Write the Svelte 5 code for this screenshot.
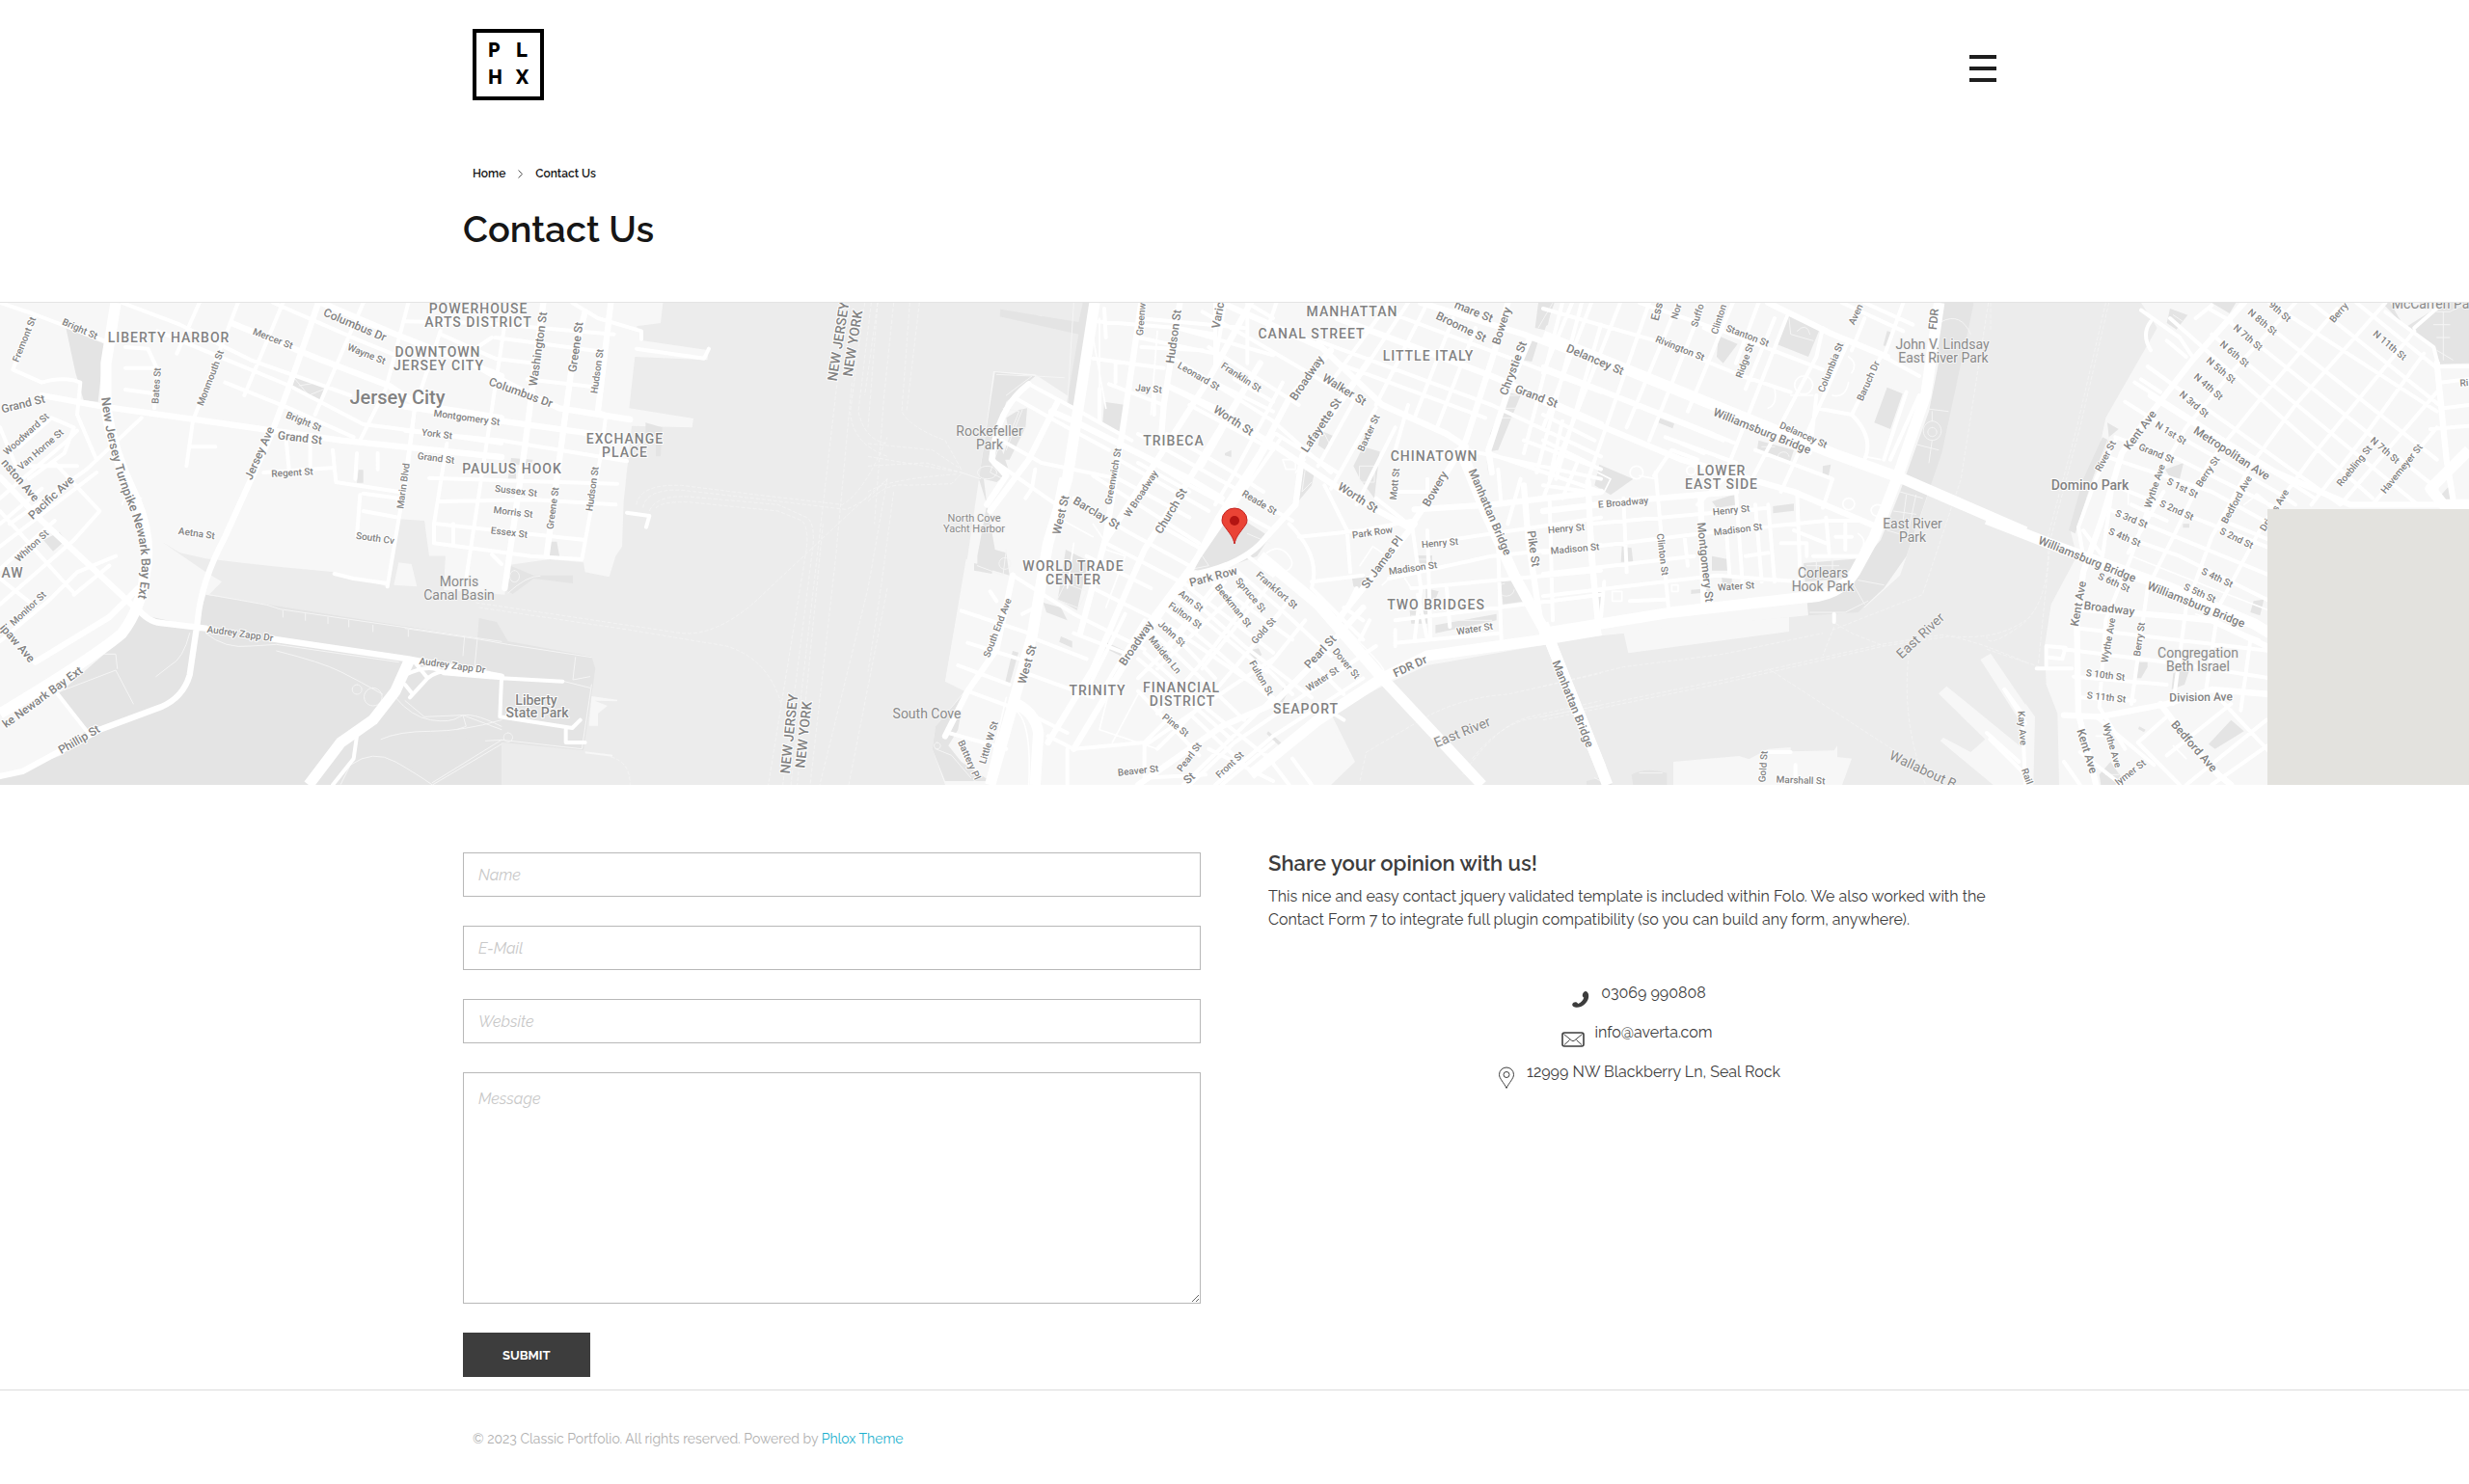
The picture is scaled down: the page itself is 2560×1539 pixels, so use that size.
<script lang="ts">
	type Kind = 'street' | 'avenue' | 'district' | 'place' | 'park' | 'small' | 'city';
	type Label = [text: string, x: number, y: number, angle: number, kind: Kind];

	interface Tile {
		x: number;
		water: string;
		land?: string;
		parks: string;
		paths?: string;
		ferries?: string;
		highways: string;
		avenues: string;
		streets: string;
		lanes?: string;
		labels: Label[];
	}

	// Every tile is drawn at three units to the pixel.
	const tiles: Tile[] = [
		{
			x: 0,
			water:
				'M505 757L560 790 640 808 850 832 1040 850 1205 895 1240 685 1320 690 1330 800 1385 800 1380 905 1560 940V1170L880 980 650 920 690 880 640 850Z',
			land: 'M1240 820L1280 825 1297 895 1225 890Z',
			parks:
				'M640 920L830 950 1560 1066V1512H0V1490L190 1420 270 1340 180 1230 330 1100 430 980 610 1020Z M910 235L1010 275 1000 315 905 280Z M205 90L325 140 305 320 260 315 235 230Z M1115 532h15v40h-20z M135 750l50-25 20 25-40 35z',
			paths:
				'M650 920L830 952 870 965 1560 1066 M880 970v20 M950 980v20 M1020 990v20 M1085 1000v20 M1160 1015v20 M1270 1030v20 M640 1040Q700 1090 780 1080L860 1075 1240 1130 M860 1095Q1000 1130 1060 1160T1190 1230 M1230 1240Q1280 1300 1340 1310T1430 1300T1560 1330 M1185 1370Q1240 1345 1340 1345T1560 1310 M1060 1510L1090 1450Q1160 1400 1230 1440T1345 1512L1560 1385 M190 1220L360 1155 415 1260 M320 1105H360L365 1150 M590 1040Q570 1120 530 1140L485 1175 M1110 1200a15 15 0 1 0 1 0z M1160 1210a28 28 0 1 0 1 0z M910 240L960 300 1010 280 M930 270L990 260',
			highways:
				'M360 12L330 200V340Q350 480 420 620 475 750 450 860 440 960 380 1040 300 1110 0 1290 M1275 1120L1230 1220 1160 1310 1060 1380 960 1512',
			avenues:
				'M990 12Q910 250 840 430L700 740Q625 880 615 1000L590 1170Q570 1240 500 1270L310 1340 70 1470 0 1485 M130 300L320 335 640 380 1060 440 1560 492 M430 970L130 690 0 555 M425 960Q460 1005 500 1008L640 1025 M850 1058L1270 1120 1560 1175 M110 1130L340 990 430 900 M720 75L1000 190 1210 270 1300 330 1560 370 M1000 12L1230 110 1560 240',
			streets:
				'M0 12L100 45 350 140 M380 12L560 80 780 190 1090 300 M850 12L1120 130 1330 215 M490 100L900 270 1130 390 1300 412 1560 450 M700 260L900 340 1100 430 M740 12L600 380 580 520 M620 12L550 170 M880 12L760 300 M1130 12L980 360 M1270 12L1200 280 1120 440 M390 150L460 155 490 220 480 340 M390 215H490 M390 282L480 295 M0 620L210 440 240 410 M0 770L300 540 M0 840L170 690 M0 950L230 750 310 660 170 510 M0 1065L150 940 240 850 360 800 M230 920L340 830 M0 660L230 915 M0 870L100 950 M0 700L130 590 M40 220L110 50 M40 220L130 260Q200 240 250 260L240 360 300 500 M590 460H670 M890 440L900 540 M965 440V530 M1035 470L1045 570 1240 600 M820 540L1040 525 M1110 480L1105 560 M1175 480V530 M1120 610L1110 740 M1130 605L1240 620 M1130 660L1240 680 M1290 340L1270 510 1205 895 M1040 855L1100 870 1205 885 M180 1230L270 1345 M440 370L270 530 30 700 M1110 1360L1100 1430 1035 1512 M60 460L160 370 230 400 200 480 90 560 M0 400L50 520H240 M1290 1130L1330 1180 1275 1240 M1330 1180Q1370 1150 1420 1160L1560 1175',
			lanes:
				'M380 640Q390 600 440 620',
			labels: [
				['LIBERTY HARBOR', 524, 121, 0, 'district'],
				['Fremont St', 76, 125, -68, 'street'],
				['Bright St', 250, 92, 24, 'street'],
				['Bates St', 485, 270, -86, 'street'],
				['Monmouth St', 655, 247, -69, 'street'],
				['Mercer St', 850, 123, 21, 'street'],
				['Columbus Dr', 1105, 80, 23, 'avenue'],
				['Wayne St', 1140, 170, 22, 'street'],
				['DOWNTOWN', 1362, 166, 0, 'district'],
				['JERSEY CITY', 1366, 208, 0, 'district'],
				['Jersey City', 1237, 305, 0, 'city'],
				['Grand St', 72, 328, -14, 'avenue'],
				['Woodward St', 80, 420, -42, 'street'],
				['Van Horne St', 125, 468, -41, 'street'],
				['nston Ave', 62, 565, 50, 'avenue'],
				['Pacific Ave', 160, 618, -43, 'avenue'],
				['Whiton St', 100, 768, -43, 'street'],
				['AW', 40, 852, 0, 'district'],
				['Monitor St', 86, 963, -43, 'street'],
				['ipaw Ave', 54, 1070, 49, 'avenue'],
				['ke Newark Bay Ext', 133, 1238, -36, 'avenue'],
				['Phillip St', 246, 1372, -30, 'avenue'],
				['Jersey Ave', 806, 480, -66, 'avenue'],
				['Bright St', 944, 380, 22, 'street'],
				['Grand St', 934, 433, 7, 'avenue'],
				['Regent St', 910, 540, -3, 'street'],
				['Aetna St', 612, 730, 8, 'street'],
				['Marin Blvd', 1254, 582, -82, 'street'],
				['South Cv', 1166, 745, 8, 'street'],
				['York St', 1360, 421, 7, 'street'],
				['Grand St', 1357, 494, 7, 'street'],
				['Montgomery St', 1453, 369, 8, 'street'],
				['Morris', 1429, 880, 0, 'place'],
				['Canal Basin', 1427, 922, 0, 'place'],
				['Audrey Zapp Dr', 748, 1042, 8, 'street'],
				['Audrey Zapp Dr', 1406, 1140, 8, 'street']
			]
		},
		{
			x: 1260,
			water:
				'M802 12L795 75 720 85 740 130 945 160 940 190 715 180 697 340 897 372 893 400 705 395 680 630 675 770 655 800 635 865 560 850 555 820 450 810 320 828 310 920 120 905 125 800 75 800 60 690H0V1512H1500V12Z',
			parks:
				'M0 1018L225 1055 230 993 285 1005 320 1065 580 1112 592 1150 555 1405 250 1375 100 1355 0 1358Z M0 1440L75 1512H0Z M315 825L400 860 522 860V885L400 870 335 918 310 905Z M330 495L398 500 390 520 345 515V560H320Z M450 755h22l10 55h-35z M748 385L800 400 795 490H780V440L748 415Z',
			paths:
				'M0 1025L225 1058 320 1075 580 1115 M225 1055L215 1160 M185 1050L180 1110 M530 1115L522 1185 575 1175 M575 1210L495 1190 M580 1200L550 1400 300 1372 250 1375 M300 1372L85 1505 M0 1250L60 1300 180 1295 300 1340 M180 1295L190 1330 160 1340 M320 1350a14 14 0 1 0 1 0z M340 845a15 18 0 1 0 1 0z M320 915Q380 860 420 862',
			land:
				'M580 1236L660 1247V1252L590 1250 630 1266 600 1290V1328H572ZM560 1408L645 1418V1424L560 1414Z',
			ferries:
				'M720 640Q730 575 860 580L1100 610 1360 640Q1430 600 1500 430 M740 650Q750 590 860 595L1100 622 1370 655Q1440 630 1500 560 M760 660Q780 610 880 615L1160 640 1250 680Q1280 700 1265 800L1175 1512 M780 650Q800 630 880 632L1160 660 1235 690Q1260 720 1245 800L1130 1512 M220 945L860 1040Q960 1050 1080 950L1400 650 1500 560 M230 960L700 1030 1000 1080Q1130 1120 1170 1260 M1430 12L1385 350Q1390 450 1500 490 M1450 12L1410 350Q1430 440 1500 450 M1470 12L1430 300 M1390 260L1340 800 1260 1512 M1500 560L1440 900 1290 1512 M1500 900L1380 1512 M1345 250L1200 1512 M640 1425Q700 1440 700 1512 M1300 700L1220 1512',
			highways: '',
			avenues:
				'M180 180Q300 260 480 340L700 375 M0 335L300 380 M300 380L620 425 M640 12L600 350 M430 12L370 480 310 900 M560 40L520 200 440 800',
			streets:
				'M0 70L250 75 650 110 M280 120L620 165 M110 110L280 185 400 200 M270 120L180 180 M320 12L190 870 M110 100L30 340 0 560 M380 250L600 275 M0 410L300 440 690 505 M75 557L400 568 660 575 M110 630L400 625 655 640 M100 700L560 750 M90 760L390 800 550 810 M130 450L90 700V760 M150 700V760 M720 155L930 185 945 155 M520 12L600 60 735 100V125 M690 665L760 675 750 710 M600 350L625 360 610 480 550 810 M0 1170Q80 1130 120 1165L300 1180 490 1190 M300 1180L295 1300 520 1335 545 1310 M500 1340V1380H560 M270 795L300 825 M0 1200L20 1225',
			labels: [
				['POWERHOUSE', 229, 31, 0, 'district'],
				['ARTS DISTRICT', 229, 73, 0, 'district'],
				['Washington St', 415, 155, -82, 'avenue'],
				['Greene St', 532, 150, -82, 'avenue'],
				['Hudson St', 596, 224, -82, 'street'],
				['Columbus Dr', 360, 292, 20, 'avenue'],
				['EXCHANGE', 684, 436, 0, 'district'],
				['PLACE', 684, 478, 0, 'district'],
				['PAULUS HOOK', 333, 528, 0, 'district'],
				['Sussex St', 345, 597, 7, 'street'],
				['Morris St', 335, 663, 7, 'street'],
				['Essex St', 325, 727, 7, 'street'],
				['Greene St', 459, 652, -82, 'street'],
				['Hudson St', 582, 592, -82, 'street'],
				['Liberty', 409, 1247, 0, 'park'],
				['State Park', 411, 1288, 0, 'park'],
				['NEW JERSEY', 1346, 132, -81, 'park'],
				['NEW YORK', 1393, 138, -81, 'park'],
				['NEW JERSEY', 1195, 1352, -84, 'park'],
				['NEW YORK', 1238, 1357, -84, 'park']
			]
		},
		{
			x: 2700,
			water:
				'M0 12H695L650 320 520 235 390 225 370 380 345 560 310 800 240 1190 300 1220 210 1330 200 1400 240 1512H0Z',
			land: 'M305 810L420 830 440 870 400 1000 320 1200 240 1190Z M495 50L540 52V72L495 66Z',
			parks:
				'M697 12L642 335 618 325 655 110 410 55 412 32 595 62 655 72 668 12Z M395 228L520 240 430 320 400 420 440 540 400 570 360 560 370 640 395 780 430 790 440 860 340 830V800L370 640 345 560Z M735 320L802 330 785 420 730 385Z M470 345L495 340 490 400 440 500 415 500 440 430 430 370Z M1010 840Q1020 800 1110 650L1250 740 1210 800 1130 830 1040 850Z M545 945L600 960 620 1000 555 975Z M735 1065L800 1095 795 1115 735 1085Z M330 822L390 835 385 855 330 845Z M210 1330L300 1225 280 1340 250 1390 290 1440 380 1500H240L200 1400Z M615 780L685 815 650 970 590 935Z M450 1095L468 1100 440 1200H425Z M1110 480l20-10v22l-20-5z M600 1050l35 15v20l-40-18z',
			paths:
				'M400 235L510 240 430 300 M380 400L420 420 380 540 420 560 M350 560L290 540 M370 520a30 20 0 1 0 1 0z M420 340L470 350 450 400 490 400 M430 780L420 860 340 830 M425 805a18 18 0 1 0 1 0z M1010 840L1060 830 1040 800 M1180 730L1250 760 M600 940L650 960 M615 885L680 910 650 970 590 935Z M210 1400L260 1420 320 1490 M215 1380a10 10 0 1 0 1 0z M480 345L430 470 M640 12L620 330 M520 240L610 245',
			ferries:
				'M30 12L0 400 M80 12L50 300 20 700 M130 12L105 350Q130 400 240 440L290 530 M0 450L200 470 290 530 M0 490L290 540 M0 520L180 510 290 540 M0 600Q60 560 280 545 M160 12L120 350 M80 600L40 900 0 1160 M0 630Q60 570 120 580L260 575 290 545',
			highways: 'M705 12L620 560 560 760 510 1050 440 1300 380 1512 M440 1250Q520 1280 530 1350L520 1512',
			avenues:
				'M1220 200L1000 560 860 780 700 1150 560 1380 M1260 420L1110 680 1000 840 880 1000 760 1200 640 1400 M850 12L790 420 740 740 660 1040 M970 12L920 330 910 460 M1190 12L1060 250 900 500 740 750 M500 265Q400 340 385 500L430 550 370 640 M590 320L500 500 380 660 M450 860L400 1090 310 1220 240 1360 M570 350L640 380 820 470 1000 560 1100 620',
			streets:
				'M710 70L840 80 960 90 1260 175 M850 150L1040 160 M700 185L920 215 M750 265L920 330 M930 270L1260 450 M510 270L640 340 820 440 M460 310L620 400 750 470 M415 440L540 510 780 560 1000 680 M400 510L600 650 M640 620L800 720 1000 830 M780 500L920 580 1060 660 M700 550L1030 760 M930 420L1120 530 1230 600 M1000 330L1260 470 M1060 250L1260 350 M960 90L1080 110 1080 220 M1110 12L1080 200 M1180 12L1260 60 M740 120L735 30 M770 200V260 M890 300V360 M740 760L1010 900 M450 860L640 980 860 1090 M700 900L940 1020 1260 1240 M640 1040L820 1110 M500 1050L680 1120 M480 1160L700 1240 M860 1100L1060 1280 1260 1440 M960 930L1240 1160 M1000 900L1260 1100 M910 1000L1080 1180 M1260 1240L980 1512 M1260 1120L1050 1260 860 1390V1500 M1180 880L900 1150 M1240 900L1040 1150 M1120 840L930 1080 M290 970L500 1040 M310 1070L470 1120 M280 1140L440 1200 M310 1220L500 1290 620 1350 M250 1350L430 1400 M560 1360L640 1400 860 1380 940 1300 M620 1400V1512 M860 1490L1050 1480 M1060 1400L1260 1500 M720 280V380 M800 980L680 1220 M860 1000L740 1200 M680 800L760 840 880 900 M900 700L1040 780 M1180 800L1260 860 M600 560L560 760 M1140 250L1260 320 M380 910L400 940 M480 980L520 960 M520 530L510 590 490 620 M1100 1512L1260 1380 M1010 1300L1180 1460',
			lanes:
				'M700 700L740 760 M590 680L700 740 M760 1180L720 1340 900 1400 M700 880L680 960 M740 780L800 800 740 960 M840 1230L760 1380 M720 60V300 M640 760L620 900 M460 1280Q510 1320 500 1512 M700 120L740 340 M900 100L880 360 M430 1240L370 1500',
			labels: [
				['Rockefeller', 378, 412, 0, 'place'],
				['Park', 378, 454, 0, 'place'],
				['North Cove', 330, 682, 0, 'small'],
				['Yacht Harbor', 331, 714, 0, 'small'],
				['South Cove', 183, 1291, 0, 'place'],
				['Greenw', 849, 62, -85, 'street'],
				['Hudson St', 951, 118, -82, 'avenue'],
				['Varic', 1088, 50, -80, 'avenue'],
				['Jay St', 874, 280, 5, 'street'],
				['Leonard St', 1029, 239, 30, 'street'],
				['Franklin St', 1160, 243, 33, 'street'],
				['Worth St', 1138, 378, 33, 'avenue'],
				['TRIBECA', 950, 442, 0, 'district'],
				['Greenwich St', 763, 553, -80, 'street'],
				['W Broadway', 850, 606, -57, 'street'],
				['Church St', 943, 661, -59, 'avenue'],
				['West St', 600, 671, -77, 'avenue'],
				['Barclay St', 712, 667, 31, 'avenue'],
				['WORLD TRADE', 638, 832, 0, 'district'],
				['CENTER', 638, 874, 0, 'district'],
				['South End Ave', 401, 1024, -69, 'street'],
				['West St', 496, 1138, -74, 'avenue'],
				['Little W St', 374, 1380, -73, 'street'],
				['Battery Pl', 314, 1434, 66, 'street'],
				['Broadway', 834, 1072, -56, 'avenue'],
				['TRINITY', 714, 1219, 0, 'district'],
				['Beaver St', 840, 1466, -6, 'street']
			]
		},
		{
			x: 3540,
			water:
				'M1440 1050L1240 1080 900 1140 780 1195 600 1290 675 1440 600 1512H1440Z',
			land: 'M540 1370L600 1320 640 1410 600 1450Z',
			parks:
				'M1245 12H1295L1265 97 1235 90Z M1215 125L1245 130 1225 195 1195 190Z M1150 290L1190 300 1120 470 1090 475 1095 420Z M700 460L752 475 735 620 690 560 670 520Z M510 525L550 535 540 580 490 640Z M570 410L615 430 590 475 560 455Z M870 798h45v25h-45z M845 970h55v40h-50z M1128 875L1185 872 1210 940 1135 950Z M895 900L935 910 925 935 895 930Z M665 865h55l-20 40-30-10z M405 1345l45 40-8 8-42-40z M455 1200l20 5-25 50-15-5z M340 1095l35-8 10 20-20 15z M1085 505l15 5-10 35z M925 1015L1115 980V1000L925 1040Z',
			paths:
				'M1150 300H1185 M1140 340H1175 M1130 370H1165 M520 530L510 600 540 570 M690 520h45v50h-45z M1245 90L1290 12 M1140 885a25 20 0 1 0 30 20 M580 420L600 460 M870 810h40 M850 985h45 M980 1000h120',
			ferries:
				'M880 1310Q1000 1240 1150 1230L1440 1165 M1040 1430Q1110 1340 1200 1310L1440 1265 M1010 1480Q1120 1320 1220 1300L1440 1250 M690 1500L710 1410 880 1310',
			highways:
				'M1000 460L1080 660 1170 860 1280 1060 1440 1460 M380 800L560 950 760 1180 1070 1512 M1440 1030L1260 1060 900 1110 760 1180 560 1310 350 1480',
			avenues:
				'M600 160L470 310 380 480 250 680 160 850 0 1080 M260 12L570 150 760 330 960 420 1020 460 M90 270L240 340 430 460 640 600 840 710 M1150 12L1110 160 1020 440 960 540 860 690 M1220 120L1160 260 1090 470 1100 540 M1200 580L1215 760 1260 1060 M620 60L1100 240 1440 390 M880 12L1200 110 1440 200 M860 700L700 900 620 1000 M720 190L630 320 510 490 490 640 400 740 M160 860Q330 830 400 740 M700 960L540 1140 420 1260 260 1330 0 1512 M860 655L1100 640 1440 600',
			streets:
				'M120 190L420 380 600 540 M220 150L500 330 M200 40L360 130 700 330 M0 480L160 580 420 720 M0 420L320 600 480 690 M900 12L740 330 M980 60L860 370 M1050 90L930 400 M840 12L650 300 M780 12L600 260 M1320 12L1200 480 M1380 12L1240 540 M1440 80L1300 560 M560 130L1100 330 1440 490 M620 200L1080 370 M700 12L1440 290 M1090 480L1440 600 M1200 440L1440 530 M900 760L1440 680 M780 870L1100 800 1440 765 M850 900L1440 845 M800 1000L1440 920 M800 1070L1120 1040 M900 720L910 1060 M850 690L880 900 860 1060 M1120 780L1130 1060 M1280 620L1290 1000 M1400 580L1430 1000 M1120 530L1130 640 M1190 560L1150 700 M500 740L700 720 850 690 M540 880L700 860 M470 700Q570 800 540 900L700 1060 M580 580L650 720 660 850 M740 620L840 700 M800 400L680 640 M740 340L600 590 M670 320L560 520 M450 260L300 540 240 640 M380 200L200 520 M740 1080L520 1230 300 1380 160 1512 M700 1180L420 1360 240 1512 M620 1000L760 1180 M620 1020L680 900 M440 980L340 1100 230 1230 60 1400 M270 880L100 1080 0 1180 M350 930L200 1130 60 1290 M0 1120L200 1290 290 1370 M30 1020L330 1310 M80 960L250 1100 420 1250 M130 900L330 1080 540 1240 M230 880L480 1060 M300 840L460 980 600 1110 M0 1220L190 1420 M460 950L300 1150 M520 1000L400 1150 480 1230 M560 1260L640 1310 M540 1130L640 1230 M160 600L0 510 M340 12V200 M240 12V130 M430 12L400 100 M0 120L240 170 M0 60L330 90 M800 600H900V560 M1020 470L1440 560 M720 1000L690 1060 M640 960L700 1000 M800 1030V1080 M430 420L620 540 M440 440L300 640 M840 330L800 470 M890 480L1020 500 M870 920L900 1060 M960 900L970 1020 M480 1430L540 1512 M400 1420L470 1512',
			lanes:
				'M540 900Q620 1000 700 1080T760 1160 M400 790Q440 760 470 800T430 860 M520 500L490 540 M450 500h40v30h-30z M690 830l40-60 30 20 M760 890l20-20 M830 870l20 30 M780 940l30 30 M500 900L600 1010',
			labels: [
				['MANHATTAN', 667, 40, 0, 'district'],
				['CANAL STREET', 541, 109, 0, 'district'],
				['LITTLE ITALY', 902, 178, 0, 'district'],
				['CHINATOWN', 921, 490, 0, 'district'],
				['TWO BRIDGES', 926, 952, 0, 'district'],
				['FINANCIAL', 136, 1210, 0, 'district'],
				['DISTRICT', 137, 1252, 0, 'district'],
				['SEAPORT', 523, 1276, 0, 'district'],
				['mare St', 1044, 38, 22, 'avenue'],
				['Broome St', 1005, 88, 26, 'avenue'],
				['Bowery', 1132, 85, -72, 'avenue'],
				['Chrystie St', 1168, 215, -69, 'avenue'],
				['Grand St', 1238, 304, 21, 'avenue'],
				['Broadway', 524, 246, -56, 'avenue'],
				['Walker St', 641, 283, 32, 'avenue'],
				['Lafayette St', 571, 394, -56, 'avenue'],
				['Baxter St', 717, 418, -65, 'street'],
				['Mott St', 798, 577, -84, 'street'],
				['Worth St', 685, 618, 33, 'avenue'],
				['Bowery', 923, 590, -60, 'avenue'],
				['Reade St', 378, 633, 31, 'street'],
				['Park Row', 233, 864, -15, 'avenue'],
				['Park Row', 729, 725, -8, 'street'],
				['St James Pl', 759, 820, -54, 'avenue'],
				['Henry St', 940, 758, -5, 'street'],
				['Madison St', 855, 837, -8, 'street'],
				['Henry St', 1333, 715, -5, 'street'],
				['Madison St', 1360, 778, -5, 'street'],
				['Pike St', 1230, 776, 82, 'avenue'],
				['Manhattan Bridge', 1095, 662, 67, 'avenue'],
				['Manhattan Bridge', 1352, 1260, 68, 'avenue'],
				['Ann St', 165, 940, 38, 'street'],
				['Fulton St', 148, 983, 35, 'street'],
				['John St', 106, 1042, 43, 'street'],
				['Maiden Ln', 83, 1106, 51, 'street'],
				['Spruce St', 350, 922, 50, 'street'],
				['Beekman St', 298, 953, 51, 'street'],
				['Frankfort St', 433, 907, 41, 'street'],
				['Gold St', 391, 1031, -48, 'street'],
				['Fulton St', 384, 1178, 60, 'street'],
				['Pearl St', 567, 1097, -47, 'avenue'],
				['Dover St', 649, 1134, 50, 'street'],
				['Water St', 574, 1182, -33, 'street'],
				['Water St', 1047, 1026, -9, 'street'],
				['FDR Dr', 847, 1144, -25, 'avenue'],
				['Pine St', 116, 1326, 38, 'street'],
				['Pearl St', 160, 1425, -53, 'street'],
				['Front St', 285, 1450, -43, 'street'],
				['St', 159, 1490, -40, 'avenue'],
				['East River', 1008, 1346, -22, 'place']
			]
		},
		{
			x: 4800,
			water:
				'M0 1065L820 985 1000 960 1110 860 1200 600 1320 80 1340 12H1500V1512H0Z',
			land:
				'M250 1035L765 990V1035L265 1102Z M405 1440L610 1422 640 1432 700 1400 770 1395V1408L905 1405 915 1390V1425L960 1430 930 1512H405Z M1230 1228L1255 1205 1500 1405V1512H1400L1235 1375 1245 1365 1330 1410 1375 1370Z M1360 1122L1392 1103 1500 1262V1340Z',
			parks:
				'M1225 12H1340L1240 480 1130 800 1060 900 980 975 825 985 820 930 940 880 1050 750 1110 600 1200 350 1230 200Z M755 45L862 90 825 180 725 140Z M1070 275L1118 295 1080 405 1030 385Z M545 115L605 140 560 200 540 180Z M175 515L280 560 210 610 160 580Z M360 370L408 388 403 403 358 385Z M670 440L780 470 765 515 665 475Z M525 630L605 605V640L540 650Z M810 822L985 808 940 870 815 880Z M525 800L575 810 580 845H525Z M245 770L275 775 280 818H242Z M170 912h15v80h-15z M555 860h32v40h-28z M460 905l60-5v12l-60 6z M1070 100l18 5-12 45-18-5z M715 645l65-8v22l-65 8z M870 520l25-5-8 40h-18z M0 12H30L15 80 0 90Z M275 1480Q320 1455 385 1475V1512H280Z M135 1500l60-15 20 27h-80z',
			paths:
				'M765 60L770 110 840 130 M790 100q30-30 40 10 M1180 340L1260 350 M1150 450L1230 470 M1210 380a28 30 0 1 0 1 0z M1210 400a14 14 0 1 0 1 0z M1210 350V380 M1210 440L1200 510 M1110 600L1180 620 M1090 660L1160 670 M1070 720L1140 740 M1130 610L1110 760 M1160 610L1130 750 M980 875L1060 890 M960 880L1000 950 M830 975H940L1010 940 M1240 70Q1300 40 1330 110 M820 830H920 M850 810V870 M900 810V860 M680 460h40 M730 490a18 18 0 0 1 35 0 M300 1475h70 M160 1490l40 20',
			ferries:
				'M0 1205L250 1145 560 1105 870 1040 M0 1300L560 1185 1050 1075 1240 1045Q1400 1070 1500 1000 M0 1310L560 1195 1060 1080 1260 1050Q1340 1060 1500 1130 M905 1020L870 1110 M910 1010L960 1040 1060 1080 M1140 1090Q1110 1300 1190 1512 M700 1150L1100 1410 M1385 12L1300 560 1180 920 900 1030',
			highways:
				'M0 115L260 220 530 330 900 480 1120 560 1500 725 M1232 12L1190 300 1100 560 1030 740 970 850Q920 930 800 930L400 975 0 1040 M0 1010L20 1060 180 1460 200 1512',
			avenues:
				'M0 320L430 500 780 600 1040 710 M700 12L900 110 1070 180 M0 660L300 625 600 600 M490 620L500 960 M140 570L150 800 170 1000',
			streets:
				'M90 12L0 230 M150 12L0 400 M240 12L90 390 0 620 M330 12L140 560 M420 12L260 400 M500 12L330 440 M590 12L450 350 M670 12L600 200 M720 60L630 280 M760 50L560 560 480 640 M870 90L850 180 650 560 M950 130L740 600 M1000 60L960 160 M1120 12L1060 180 M300 12L560 100 870 220 M0 30L350 130 620 240 770 290 M60 240L560 440 M0 210L530 420 M0 360L160 440 M0 440L160 520 M380 360L600 450 M380 430L600 510 M660 470L900 560 870 650 M850 340L960 360 M850 300L830 480 M960 360Q1030 430 1000 500 M1050 180L960 360 M1130 290L1060 500 M1170 300L1080 500 M930 12L1120 100 M1000 12L1150 80 M150 700L700 650 M0 790L530 725 880 690 1000 690 M0 855L470 800 M0 925L540 860 800 880 M840 800L985 800 M250 620L260 850 M350 540L370 760 390 960 M345 550L400 470 480 500 M600 600L620 880 M660 640L680 880 M700 640L720 880 M790 600L800 880 M880 680L890 790 M270 940L380 935 M440 740L450 830 M570 720L580 860 M0 580L140 600 M60 380L20 560 M110 500L60 620 M430 450L500 480 M740 760H820V800 M940 700V780 M910 740H960 M1060 180L1170 240 M690 1410H770 M785 1450V1500 M905 980V1005 M1435 1215L1500 1320 M1390 1370L1500 1480 M500 90L540 110 M190 880L180 990 M630 800L700 790 M780 720L880 760',
			lanes:
				'M810 240a28 28 0 1 0 1 0z M770 300L840 300 M900 300q40 10 50-40 M700 340q30-10 20-60 M290 520a20 20 0 1 0 1 0z M300 550L350 560 M460 520a14 14 0 1 0 1 0z M950 620a18 18 0 1 0 1 0z M1040 640a20 18 0 1 0 1 0z M215 910h30v30h-30z M950 180q30 20 10 50 M170 540L210 560 190 600 M400 890h20v20h-20z M980 730q30 20 10 50 M1050 500L1000 490',
			labels: [
				['Ess', 355, 40, -76, 'avenue'],
				['Nor', 415, 40, -74, 'street'],
				['Suffo', 481, 50, -73, 'street'],
				['Clinton', 545, 64, -72, 'street'],
				['Stanton St', 636, 113, 21, 'street'],
				['Ridge St', 628, 193, -70, 'street'],
				['Rivington St', 427, 152, 22, 'street'],
				['Delancey St', 162, 190, 23, 'avenue'],
				['Williamsburg Bridge', 682, 410, 22, 'avenue'],
				['Delancey St', 811, 422, 24, 'street'],
				['Columbia St', 895, 214, -68, 'street'],
				['Baruch Dr', 1010, 256, -66, 'street'],
				['Aven', 973, 47, -65, 'street'],
				['FDR', 1214, 62, -84, 'avenue'],
				['John V. Lindsay', 1243, 142, 0, 'place'],
				['East River Park', 1244, 184, 0, 'place'],
				['LOWER', 556, 535, 0, 'district'],
				['EAST SIDE', 554, 577, 0, 'district'],
				['E Broadway', 248, 634, -5, 'street'],
				['Henry St', 586, 656, -6, 'street'],
				['Madison St', 606, 718, -7, 'street'],
				['Clinton St', 372, 796, 83, 'street'],
				['Montgomery St', 504, 820, 84, 'avenue'],
				['Water St', 600, 895, -4, 'street'],
				['Corlears', 870, 853, 0, 'place'],
				['Hook Park', 871, 895, 0, 'place'],
				['East River', 1148, 700, 0, 'place'],
				['Park', 1149, 742, 0, 'place'],
				['East River', 1174, 1046, -43, 'place'],
				['Wallabout B', 1182, 1464, 25, 'place'],
				['Gold St', 683, 1456, -86, 'street'],
				['Marshall St', 801, 1496, 2, 'street'],
				['Kay Ave', 1490, 1334, 86, 'street'],
				['Rail', 1506, 1484, 70, 'street']
			]
		},
		{
			x: 6180,
			water:
				'M0 12H480L530 90 370 370 330 560 260 720 280 800 200 950 180 1080 185 1200 220 1290 225 1512H145L150 1300 12 1105 0 1110Z',
			land: '',
			parks:
				'M1230 12H1255L1300 90 1395 30 1420 12H1500V200L1410 203 1390 150 1290 75Z M1395 630L1440 580 1445 632Z M555 530L612 510 600 560 570 555Z M580 1165L635 1140 615 1200 575 1215Z M690 1385L760 1310 800 1345 710 1400Z M830 940l32-5-12 50-30-10z M350 1480L385 1440 420 1490 400 1512H355Z M375 385L410 405 380 430Z M470 1130h30v15l-20 35h-15z M610 700h20v12h-20z M360 430L300 560 255 720 275 730 330 560 380 440Z M700 12H775L755 45Z M570 30L625 50 590 95 560 75Z M474 1330l20 10-5 8-18-10z',
			paths:
				'M1400 40H1440L1480 20 M1390 80H1440 M1400 120H1440 M1400 160L1450 190 M1420 40V190 M380 430L330 560 280 720 M190 1140H265 M370 1480H410 M580 50l30 20',
			ferries:
				'M380 12L290 400 200 740 160 1140 M370 12L280 400 190 740Q200 950 100 1020T0 1050 M0 1090L180 1150 M12 12V100',
			highways: 'M0 685L230 775 560 895 830 1010 880 1040 M1500 470L1380 590 1420 640H1500',
			avenues:
				'M800 12L640 190 500 370 420 480 360 680 300 850 280 1000 285 1290 340 1512 M510 300L700 420 900 540 1130 640H1500 M290 965L550 985 700 1000 880 1085 M240 1295L350 1300 560 1260 700 1215 880 1230 M540 1260L600 1340 720 1480 760 1512 M1400 200L1430 500 1450 620',
			streets:
				'M820 40L1400 500 M760 75L1400 590 M700 110L1340 640 M570 60L1200 620 M500 210L1100 640 M460 260L1020 620 M880 12L1400 350 M1010 12L1420 340 M1150 12L1400 215 M430 320L620 440 900 600 960 640 M400 430L600 500 960 680 M370 490L700 600 880 700 M370 570L880 775 M370 650L880 860 M370 720L600 800 880 940 M960 12L760 230 620 400 540 540 450 800 370 1000 350 1270 430 1400 M1090 30L860 300 690 510 590 720 500 900 450 1260 M1240 12L960 330 820 520 700 740 620 960 580 1260 M1330 100L1020 480 860 700 720 960 680 1230 M1360 170L1180 420 1010 640 M1400 290L1100 640 M1400 400L1200 640 M290 1025L880 1095 M240 1090L560 1130 880 1180 M270 1175L560 1200 M290 1240L460 1250 M730 1250L880 1410 M340 1300L520 1450 M470 1380L560 1300 M560 1420L760 1260 M470 1380L600 1512 M620 1512L870 1310 M700 1512L873 1390 M820 1060L790 1280 M390 590L360 800 300 720 M400 440L340 560 285 710 300 800 M480 35L600 120 640 180 M510 70Q480 110 510 160 M560 130L620 180 M690 30L760 70 M650 60L700 20 M1240 40L1390 150 1405 210H1500 M1330 90L1420 12 M1410 260L1500 250 M1420 340L1500 330 M1380 405L1500 395 M185 1150V1080L245 1085 235 1120 195 1115 M155 1150H265 M55 1215L110 1290 120 1512 M0 1350L100 1440 M480 250L540 290 M550 600L440 790 M840 610L900 660 M290 1410L420 1512 M290 1512L240 1440 M760 700L880 750 M450 640L560 690',
			lanes: 'M450 800L700 900 880 970 M340 1360H380V1400 M580 1390L620 1430 M440 640V600 M800 640L840 610 M650 980L850 1060',
			labels: [
				['9th St', 913, 38, 41, 'street'],
				['N 8th St', 857, 71, 40, 'street'],
				['N 7th St', 814, 121, 40, 'street'],
				['N 6th St', 772, 171, 40, 'street'],
				['N 5th St', 730, 221, 40, 'street'],
				['N 4th St', 690, 274, 41, 'street'],
				['N 3rd St', 646, 328, 40, 'street'],
				['Berry', 1095, 42, -50, 'street'],
				['N 11th St', 1255, 143, 40, 'street'],
				['McCarren Pa', 1381, 16, 0, 'place'],
				['Ri', 1486, 262, -4, 'street'],
				['Kent Ave', 478, 408, -53, 'avenue'],
				['N 1st St', 573, 418, 32, 'street'],
				['Grand St', 528, 480, 22, 'street'],
				['Metropolitan Ave', 762, 480, 33, 'avenue'],
				['River St', 369, 489, -62, 'street'],
				['Domino Park', 322, 580, 0, 'park'],
				['Wythe Ave', 523, 582, -71, 'street'],
				['Berry St', 686, 538, -56, 'street'],
				['S 1st St', 608, 589, 26, 'street'],
				['S 2nd St', 591, 657, 24, 'street'],
				['S 3rd St', 449, 684, 22, 'street'],
				['S 4th St', 430, 742, 23, 'street'],
				['Bedford Ave', 777, 624, -61, 'street'],
				['Driggs Ave', 893, 657, -59, 'street'],
				['S 2nd St', 777, 744, 26, 'street'],
				['Roebling St', 1144, 518, -51, 'street'],
				['N 7th St', 1240, 471, 41, 'street'],
				['Havemeyer St', 1291, 528, -51, 'street'],
				['Williamsburg Bridge', 311, 811, 22, 'avenue'],
				['S 6th St', 397, 882, 24, 'street'],
				['Williamsburg Bridge', 650, 950, 22, 'avenue'],
				['S 4th St', 717, 868, 25, 'street'],
				['S 5th St', 662, 915, 24, 'street'],
				['Kent Ave', 285, 948, -80, 'avenue'],
				['Broadway', 382, 964, 7, 'avenue'],
				['Wythe Ave', 379, 1063, -80, 'street'],
				['Berry St', 473, 1060, -82, 'street'],
				['Congregation', 657, 1102, 0, 'place'],
				['Beth Israel', 657, 1144, 0, 'place'],
				['S 10th St', 370, 1171, 7, 'street'],
				['S 11th St', 372, 1239, 6, 'street'],
				['Division Ave', 665, 1240, -1, 'avenue'],
				['Kent Ave', 313, 1408, 73, 'avenue'],
				['Wythe Ave', 390, 1390, 74, 'street'],
				['Bedford Ave', 645, 1392, 49, 'avenue'],
				['lymer St', 447, 1474, -38, 'street']
			]
		}
	];

	const layers = [
		'water',
		'land',
		'parks',
		'ferries',
		'paths',
		'lanes',
		'streets',
		'avenues',
		'highways'
	] as const;

	let name = $state('');
	let email = $state('');
	let website = $state('');
	let message = $state('');

	function place(tile: Tile, x: number, y: number, angle: number) {
		const left = Math.round((tile.x + x) / 3);
		const top = Math.round((y - 12) / 3);
		return `translate(${left} ${top}) rotate(${angle})`;
	}

	function submit(event: SubmitEvent) {
		event.preventDefault();
	}
</script>

<header class="site-header container">
	<a class="logo" href="/" aria-label="Phlox">
		<span>P</span><span>L</span><span>H</span><span>X</span>
	</a>
	<button type="button" class="menu" aria-label="Menu">
		<span></span><span></span><span></span>
	</button>
</header>

<div class="page-title container">
	<nav class="breadcrumb">
		<a href="/">Home</a>
		<svg width="5" height="9" viewBox="0 0 5 9" aria-hidden="true">
			<path d="M.5 .5l4 4-4 4" />
		</svg>
		<span>Contact Us</span>
	</nav>
	<h1>Contact Us</h1>
</div>

<div class="map">
	<svg viewBox="0 0 2560 500" preserveAspectRatio="xMidYMid slice">
		<defs>
			<path id="turnpike" d="M110 98Q116 150 134 200 161 260 147 310L138 345" />
		</defs>
		{#each layers as layer}
			<g class={layer}>
				{#each tiles as tile}
					<path d={tile[layer] ?? ''} transform="translate({tile.x / 3} -4) scale({1 / 3})" />
				{/each}
			</g>
		{/each}
		<g class="labels">
			{#each tiles as tile}
				{#each tile.labels as [text, x, y, angle, kind]}
					<text class={kind} transform={place(tile, x, y, angle)}>{text}</text>
				{/each}
			{/each}
			<text class="route">
				<textPath href="#turnpike">New Jersey Turnpike Newark Bay Ext</textPath>
			</text>
		</g>
		<rect class="blank" x="2351" y="214" width="209" height="286" />
		<g class="marker" transform="translate(1280 250)">
			<path
				d="M0 0C-1.500-7-4.500-10-8-15C-11-19-13-21-13-24.500A13 12.500 0 0 1 13-24.500C13-21 11-19 8-15C4.500-10 1.500-7 0 0Z"
			/>
			<circle cx="0" cy="-24" r="5" />
		</g>
	</svg>
</div>

<main class="contact container">
	<form onsubmit={submit}>
		<input type="text" placeholder="Name" aria-label="Name" bind:value={name}>
		<input type="email" placeholder="E-Mail" aria-label="E-Mail" bind:value={email}>
		<input type="text" placeholder="Website" aria-label="Website" bind:value={website}>
		<textarea placeholder="Message" aria-label="Message" bind:value={message}></textarea>
		<button type="submit" class="submit">SUBMIT</button>
	</form>

	<section class="info">
		<h2>Share your opinion with us!</h2>
		<p>
			This nice and easy contact jquery validated template is included within Folo. We also worked
			with the Contact Form 7 to integrate full plugin compatibility (so you can build any form,
			anywhere).
		</p>
		<ul>
			<li>
				<svg class="solid" width="24" height="24" viewBox="0 0 24 24" aria-hidden="true">
					<path
						d="M17.300 5.200C18.500 4.500 20 5.300 20.800 7.500C22 11 20.500 15.500 17 18.500C13.700 21.300 10 22.300 7 21.500C5 20.900 3.800 19.500 4.300 18.200C4.800 16.800 6.500 16 8 16.300C9.200 16.500 9.900 17.200 10.200 18C13 17 15.400 14.600 16.300 11.500C15.300 11 14.700 10.200 14.800 8.900C14.900 7.300 15.900 5.800 17.300 5.200Z"
					/>
				</svg>
				<span>03069 990808</span>
			</li>
			<li>
				<svg width="24" height="24" viewBox="0 0 24 24" aria-hidden="true">
					<rect x="1" y="7" width="22" height="14" rx="2" stroke-width="1.600" />
					<path d="M2.500 8.500l8 6.500q1.500 1.200 3 0l8-6.500M3 19.500l5.500-5M21 19.500l-5.500-5" />
				</svg>
				<span>info@averta.com</span>
			</li>
			<li>
				<svg width="24" height="24" viewBox="0 0 24 24" aria-hidden="true">
					<path d="M13 23.500C10.500 18 5.500 13.500 5.500 9.500a7.500 7.500 0 0 1 15 0c0 4-5 8.500-7.500 14z" />
					<circle cx="13" cy="9.500" r="3" />
				</svg>
				<span>12999 NW Blackberry Ln, Seal Rock</span>
			</li>
		</ul>
	</section>
</main>

<footer>
	<p class="container">
		© 2023 Classic Portfolio. All rights reserved. Powered by <a href="/">Phlox Theme</a>
	</p>
</footer>

<style>
	:global(body) {
		margin: 0;
		background: #fff;
		color: #3d3d3d;
		font-family: Raleway, Lato, sans-serif;
		font-size: 16px;
		line-height: 24px;
	}
	.container {
		box-sizing: border-box;
		width: 100%;
		max-width: 1600px;
		margin: 0 auto;
	}
	.site-header {
		display: flex;
		justify-content: space-between;
		align-items: center;
		padding: 30px 10px;
	}
	.logo {
		box-sizing: border-box;
		display: grid;
		grid-template-columns: 29px 29px;
		grid-template-rows: 28px 28px;
		width: 74px;
		height: 74px;
		padding: 4px 0 0 12px;
		border: 4px solid #000;
		color: #000;
		font-size: 20px;
		font-weight: 800;
		line-height: 28px;
		text-decoration: none;
	}
	.menu {
		display: flex;
		flex-direction: column;
		gap: 8px;
		width: 28px;
		margin-top: 8px;
		padding: 0;
		border: 0;
		background: none;
		cursor: pointer;
	}
	.menu span {
		width: 100%;
		height: 4px;
		background: #1e1e1e;
	}
	.page-title {
		padding: 34px 0 50px;
	}
	.breadcrumb {
		display: flex;
		align-items: center;
		gap: 13px;
		padding-left: 10px;
		color: #161616;
		font-size: 12px;
		font-weight: 600;
		line-height: 24px;
	}
	.breadcrumb a {
		color: inherit;
		text-decoration: none;
	}
	.breadcrumb path {
		fill: none;
		stroke: #555;
	}
	h1 {
		margin: 21px 0 0;
		color: #161616;
		font-size: 38px;
		font-weight: 600;
		line-height: 50px;
	}
	.map {
		border-top: 1px solid #e4e4e4;
		background: #f7f7f7;
	}
	.map svg {
		display: block;
		width: 100%;
		height: 500px;
	}
	.water {
		fill: #ececec;
	}
	.land {
		fill: #f7f7f7;
	}
	.parks {
		fill: #e4e4e4;
	}
	.paths,
	.ferries,
	.lanes,
	.streets,
	.avenues,
	.highways {
		fill: none;
		stroke: #fff;
		stroke-linejoin: round;
		stroke-linecap: round;
	}
	.paths {
		stroke: #f5f5f5;
		stroke-width: 3px;
	}
	.ferries {
		stroke: #f6f6f6;
		stroke-width: 2px;
		stroke-linecap: butt;
		stroke-dasharray: 12 6;
	}
	.lanes {
		stroke-width: 5px;
	}
	.streets {
		stroke-width: 12px;
	}
	.avenues {
		stroke-width: 19px;
	}
	.highways {
		stroke-width: 34px;
		stroke-linecap: butt;
	}
	.labels {
		fill: #828282;
		stroke: #fff;
		stroke-width: 2px;
		stroke-linejoin: round;
		paint-order: stroke;
		font-family: Roboto, sans-serif;
		text-anchor: middle;
		dominant-baseline: central;
	}
	.street {
		font-size: 10px;
		font-weight: 500;
	}
	.avenue {
		font-size: 12px;
		font-weight: 500;
	}
	.route {
		font-size: 13px;
		font-weight: 500;
		text-anchor: start;
	}
	.district {
		font-size: 14px;
		font-weight: 500;
		letter-spacing: 1px;
	}
	.place,
	.small {
		fill: #8a8a8a;
		stroke: #f4f4f4;
		font-size: 14px;
	}
	.small {
		font-size: 11px;
	}
	.park {
		font-size: 14px;
		font-weight: 500;
	}
	.city {
		font-size: 20px;
		font-weight: 500;
	}
	.blank {
		fill: #e3e2de;
	}
	.marker path {
		fill: #ea4335;
		stroke: #c5221f;
	}
	.marker circle {
		fill: #b31412;
	}
	.contact {
		display: grid;
		grid-template-columns: 1fr 1fr;
		gap: 70px;
		padding: 70px 0 13px;
	}
	form {
		display: flex;
		flex-direction: column;
		align-items: flex-start;
		gap: 30px;
	}
	input,
	textarea {
		box-sizing: border-box;
		width: 100%;
		height: 46px;
		margin: 0;
		padding: 10px 15px;
		border: 1px solid #b8b8b8;
		border-radius: 0;
		background: #fff;
		color: #3d3d3d;
		font: italic 16px/24px Raleway, Lato, sans-serif;
		outline: none;
	}
	textarea {
		height: 240px;
		padding-top: 15px;
		resize: vertical;
	}
	input::placeholder,
	textarea::placeholder {
		color: #c8c8c8;
		opacity: 1;
	}
	input:focus,
	textarea:focus {
		border-color: #3d3d3d;
	}
	.submit {
		height: 46px;
		padding: 0 41px;
		border: 0;
		background: #3d3d3d;
		color: #fff;
		font-family: inherit;
		font-size: 13px;
		font-weight: 700;
		cursor: pointer;
	}
	h2 {
		margin: 0;
		font-size: 22px;
		font-weight: 600;
		line-height: 22px;
	}
	.info p {
		margin: 12px 0 52px;
	}
	.info ul {
		display: flex;
		flex-direction: column;
		align-items: center;
		gap: 12px;
		margin: 0;
		padding: 0;
		list-style: none;
	}
	.info li {
		display: flex;
		gap: 10px;
		height: 29px;
	}
	.info li svg {
		align-self: flex-end;
		fill: none;
		stroke: #3d3d3d;
	}
	.info li .solid {
		fill: #3d3d3d;
		stroke: none;
	}
	footer {
		border-top: 1px solid #dcdcdc;
	}
	footer p {
		padding: 38px 10px 35px;
		color: #b0b0b0;
		font-size: 14px;
	}
	footer a {
		color: #1bb0ce;
		text-decoration: none;
	}
</style>
